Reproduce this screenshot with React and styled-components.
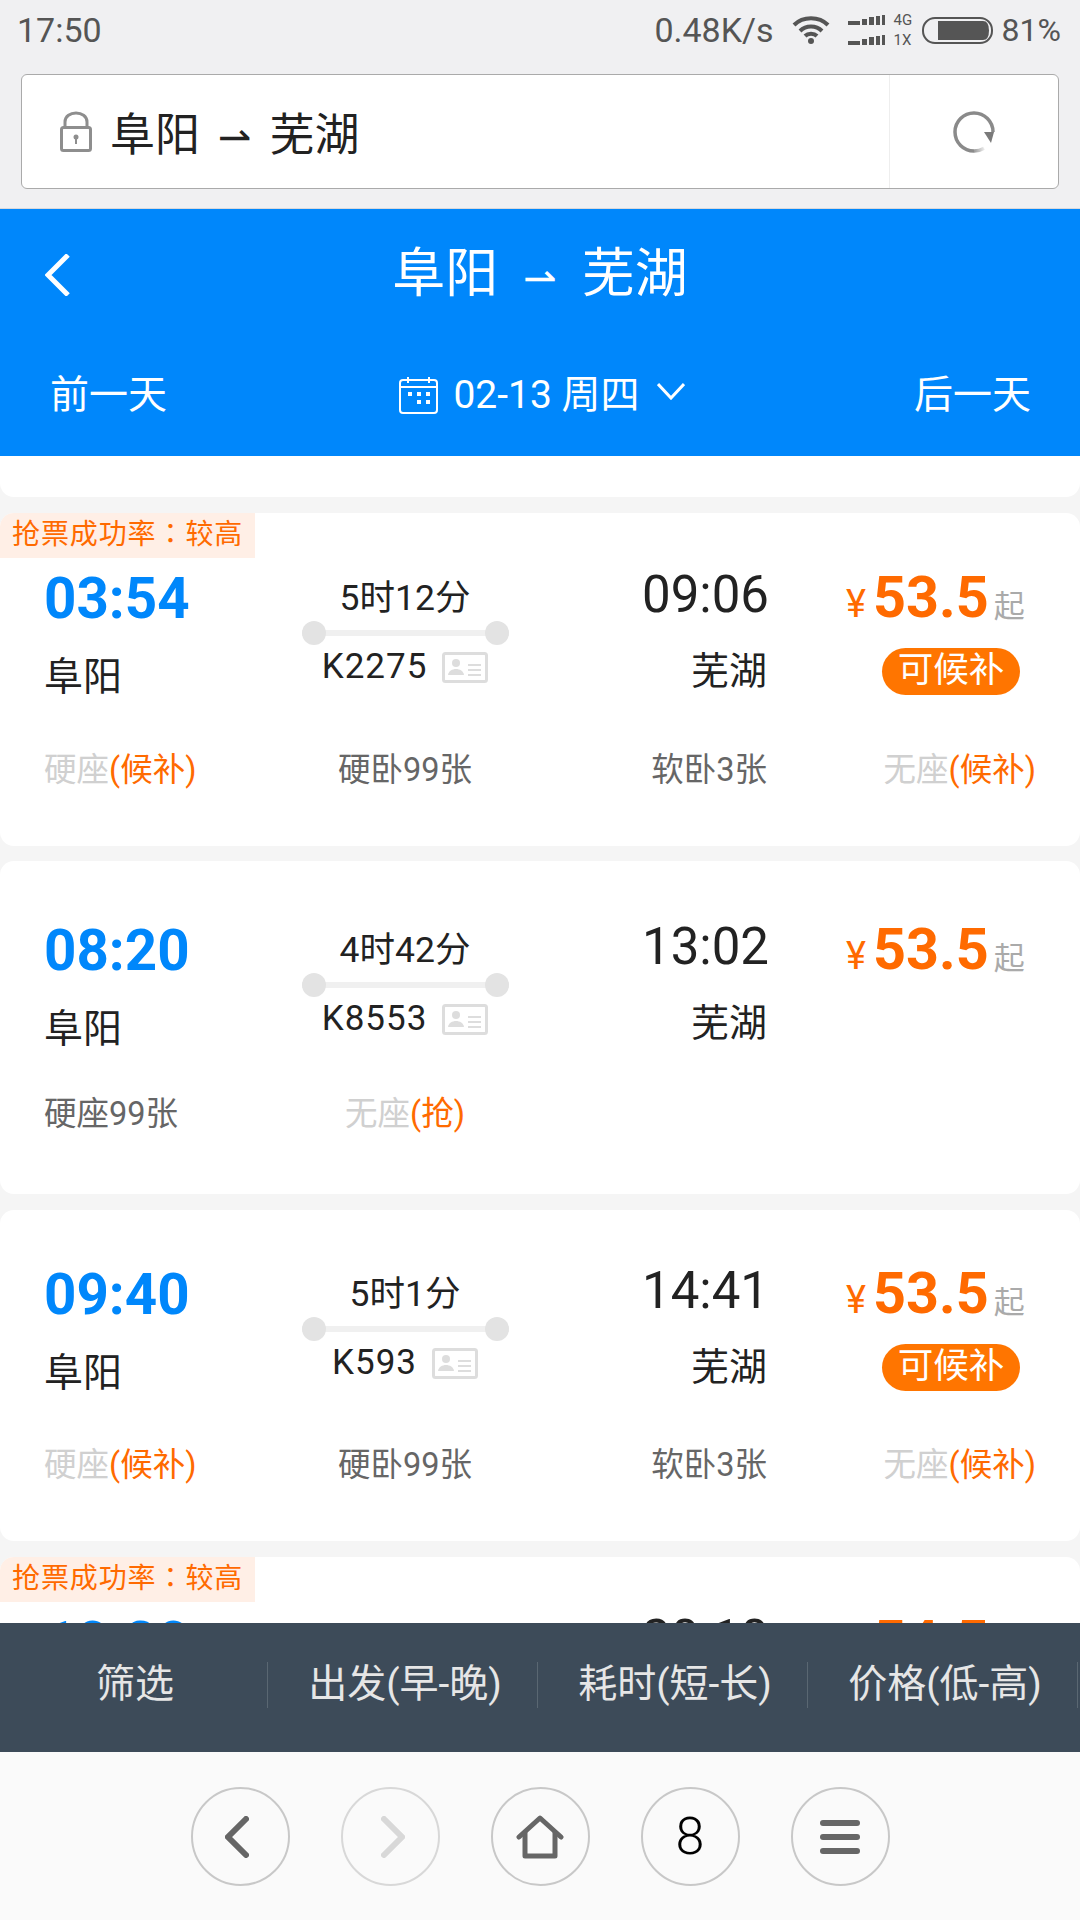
import React from "react";
import styled, { createGlobalStyle } from "styled-components";

const GlobalStyle = createGlobalStyle`
  html, body {
    margin: 0;
    padding: 0;
    background: #f0f0f2;
  }
  * {
    box-sizing: border-box;
  }
  body {
    font-family: Roboto, "Noto Sans CJK SC", sans-serif;
  }
`;

const Screen = styled.div`
  width: 1080px;
  height: 1920px;
  display: flex;
  flex-direction: column;
  overflow: hidden;
`;

const StatusBar = styled.div`
  height: 74px;
  flex: none;
  display: flex;
  align-items: center;
  justify-content: space-between;
  padding: 0 19px 14px 17px;
  color: #555;
  font-size: 34px;
  background: #f0f0f2;
`;

const StatusRight = styled.div`
  display: flex;
  align-items: center;
`;

const NetSpeed = styled.span`
  margin-right: 18px;
`;

const WifiIcon = styled.svg`
  margin-right: 18px;
`;

const SimLabels = styled.div`
  display: flex;
  flex-direction: column;
  font-size: 15px;
  line-height: 20px;
  margin: 0 5px 0 9px;
  width: 23px;
`;

const Percent = styled.span`
  margin-left: 8px;
  font-size: 32px;
`;

const AddressWrap = styled.div`
  flex: none;
  height: 135px;
  padding: 0 21px 20px;
  background: #f0f0f2;
  border-bottom: 1px solid #d8d8dc;
`;

const AddressBar = styled.div`
  height: 115px;
  display: flex;
  background: #fff;
  border: 1px solid #aaa;
  border-radius: 6px;
`;

const AddressText = styled.div`
  flex: 1;
  display: flex;
  align-items: center;
  padding-left: 38px;
  gap: 18px;
  font-size: 45px;
  color: #222;
`;

const RefreshCell = styled.div`
  width: 169px;
  display: flex;
  align-items: center;
  justify-content: center;
  border-left: 1px solid #eee;
`;

const Arrow = styled.span`
  font-family: "DejaVu Sans", sans-serif;
  font-size: 40px;
  margin: 0 ${(p) => p.$side}px;
`;

const Header = styled.div`
  flex: none;
  height: 247px;
  background: #0087fb;
  color: #fff;
`;

const TitleRow = styled.div`
  position: relative;
  height: 124px;
  display: flex;
  align-items: center;
  justify-content: center;
  padding-bottom: 5px;
  font-size: 53px;
`;

const BackIcon = styled.svg`
  position: absolute;
  left: 45px;
  top: 45px;
`;

const DateRow = styled.div`
  height: 123px;
  display: flex;
  align-items: center;
  justify-content: space-between;
  padding: 0 49px 7px 50px;
  font-size: 39px;
`;

const DatePicker = styled.div`
  display: flex;
  align-items: center;
  font-size: 39px;
  gap: 17px;
  padding-left: 3px;
`;

const CalendarIcon = styled.svg`
  margin: 7px -2px 0 0;
`;

const List = styled.div`
  flex: 1;
  min-height: 0;
  overflow: hidden;
  background: #f5f5f5;
`;

const TopStrip = styled.div`
  height: 41px;
  background: #fff;
  border-radius: 0 0 14px 14px;
  margin-bottom: 16px;
`;

const Card = styled.div`
  position: relative;
  height: ${(p) => p.$h}px;
  padding: ${(p) => p.$top}px 44px 0;
  background: #fff;
  border-radius: 14px;
  margin-bottom: ${(p) => p.$after}px;
`;

const Badge = styled.div`
  position: absolute;
  left: 0;
  top: 0;
  width: 255px;
  height: 45px;
  padding-left: 12px;
  line-height: 44px;
  font-family: Roboto, "Noto Sans CJK TC", sans-serif;
  font-size: 28px;
  letter-spacing: 0.9px;
  color: #ff6a00;
  background: #ffefe6;
  border-radius: 14px 0 0 0;
  white-space: nowrap;
`;

const TripRow = styled.div`
  display: grid;
  grid-template-columns: 260px 202px 261px 1fr;
  height: 170px;
`;

const Depart = styled.div`
  display: flex;
  flex-direction: column;
`;

const DepartTime = styled.div`
  color: #0087fb;
  font-size: 56.5px;
  font-weight: 700;
  line-height: 68px;
  margin: 1px 0 -1px;
`;

const City = styled.div`
  color: #222;
  font-size: ${(p) => p.$size}px;
  line-height: 50px;
  margin-top: 20px;
`;

const Middle = styled.div`
  display: flex;
  flex-direction: column;
  align-items: center;
`;

const Duration = styled.div`
  color: #222;
  font-size: 35.5px;
  line-height: 68px;
  height: 57px;
`;

const Track = styled.div`
  position: relative;
  width: 207px;
  height: 24px;
  flex: none;
  &::before {
    content: "";
    position: absolute;
    left: 0;
    right: 0;
    top: 9px;
    height: 6px;
    background: #f0f0f0;
  }
`;

const Dot = styled.span`
  position: absolute;
  top: 0;
  ${(p) => p.$side}: 0;
  width: 24px;
  height: 24px;
  border-radius: 50%;
  background: #e3e3e3;
`;

const TrainLine = styled.div`
  display: flex;
  align-items: center;
  gap: 15px;
  color: #222;
  font-size: 35px;
  line-height: 44px;
  letter-spacing: 1px;
  white-space: nowrap;
`;

const Arrive = styled.div`
  display: flex;
  flex-direction: column;
  align-items: flex-end;
`;

const ArriveTime = styled.div`
  color: #222;
  font-size: 51px;
  line-height: 62px;
  margin-right: -2px;
`;

const Price = styled.div`
  padding-left: 79px;
  display: flex;
  flex-direction: column;
  align-items: flex-start;
`;

const PriceLine = styled.div`
  display: flex;
  align-items: baseline;
  height: 68px;
  line-height: 68px;
`;

const Yen = styled.span`
  color: #ff6a00;
  font-size: 38px;
  margin-right: 7px;
`;

const Amount = styled.span`
  color: #ff6a00;
  font-size: 57.5px;
  font-weight: 700;
`;

const From = styled.span`
  color: #aaa;
  font-size: 31px;
  margin-left: 5px;
`;

const Pill = styled.div`
  width: 138px;
  height: 47px;
  margin: 16px 0 0 36px;
  border-radius: 24px;
  background: #ff7500;
  color: #fff;
  font-size: 35.5px;
  line-height: 45px;
  text-align: center;
  white-space: nowrap;
`;

const SeatRow = styled.div`
  display: grid;
  grid-template-columns: 260px 202px 261px 1fr;
  margin-top: ${(p) => p.$gap}px;
  font-size: 32.5px;
  line-height: 40px;
  white-space: nowrap;
`;

const Seat = styled.div`
  text-align: ${(p) => p.$align};
  color: ${(p) => (p.$off ? "#d0d0d0" : "#666")};
`;

const SeatNote = styled.span`
  color: #ff6a00;
`;

const SortBar = styled.div`
  flex: none;
  height: 129px;
  display: grid;
  grid-template-columns: repeat(4, 270px);
  padding-bottom: 6px;
  align-items: center;
  background: #3d4b59;
  margin-left: -2px;
  width: 1082px;
`;

const SortItem = styled.div`
  height: 46px;
  padding-left: 5px;
  line-height: 44px;
  text-align: center;
  font-size: 39px;
  color: #e6e6e6;
  border-right: 1px solid #5a6772;
  white-space: nowrap;
`;

const BrowserBar = styled.div`
  flex: none;
  height: 168px;
  display: flex;
  justify-content: center;
  gap: 51px;
  padding-top: 35px;
  background: #fafafa;
`;

const RoundButton = styled.div`
  width: 99px;
  height: 99px;
  border-radius: 50%;
  border: 2px solid ${(p) => (p.$dim ? "#d8d8d8" : "#c8c8c8")};
  display: flex;
  align-items: center;
  justify-content: center;
  font-size: 52px;
  font-weight: 300;
  color: #000;
`;

const NavChevron = styled.svg`
  margin: 0 ${(p) => (p.$left ? 7 : 0)}px 0 ${(p) => (p.$left ? 0 : 6)}px;
`;

const Wifi = () => (
  <WifiIcon width="38" height="30" viewBox="0 0 38 30" fill="none" stroke="#555" strokeWidth="4">
    <path d="M2 10 C11 1 27 1 36 10" />
    <path d="M8 16 C14 10 24 10 30 16" />
    <path d="M13 21 C16 18 22 18 25 21" />
    <circle cx="19" cy="26" r="3" fill="#555" stroke="none" />
  </WifiIcon>
);

const SignalBars = ({ y }) => (
  <>
    <rect x="0" y={y + 6} width="12" height="4" />
    <rect x="14" y={y + 4} width="5" height="6" />
    <rect x="21" y={y + 2} width="5" height="8" />
    <rect x="28" y={y + 1} width="4" height="9" />
    <rect x="34" y={y} width="3" height="10" />
  </>
);

const Signal = () => (
  <svg width="37" height="31" viewBox="0 0 37 31" fill="#555">
    <SignalBars y={0} />
    <SignalBars y={20} />
  </svg>
);

const Battery = () => (
  <svg width="72" height="27" viewBox="0 0 72 27">
    <rect x="1" y="1" width="69" height="25" rx="12" fill="none" stroke="#555" strokeWidth="2" />
    <path d="M16 4 H61 Q67 4 67 13.5 Q67 23 61 23 H16 Z" fill="#555" />
  </svg>
);

const Lock = () => (
  <svg width="32" height="41" viewBox="0 0 32 41" fill="none" stroke="#8e8e8e" strokeWidth="3">
    <path d="M5 16 V11 C5 -1 27 -1 27 11 V16" />
    <rect x="1.5" y="16.5" width="29" height="23" rx="2" />
    <circle cx="16" cy="26" r="2.5" fill="#8e8e8e" stroke="none" />
    <rect x="15" y="27" width="2" height="6" fill="#8e8e8e" stroke="none" />
  </svg>
);

const Refresh = () => (
  <svg width="44" height="44" viewBox="0 0 44 44" fill="none" strokeWidth="3.5">
    <defs>
      <linearGradient id="refreshFade" gradientUnits="userSpaceOnUse" x1="33" y1="38" x2="20" y2="41">
        <stop offset="0" stopColor="#f4f4f4" />
        <stop offset="1" stopColor="#8a8a8a" />
      </linearGradient>
    </defs>
    <path d="M22 41 A19 19 0 1 1 41 22" stroke="#8a8a8a" />
    <path d="M32 38.2 A19 19 0 0 1 22 41" stroke="url(#refreshFade)" />
    <path d="M32 22 H42 L39 33 Z" fill="#7a7a7a" />
  </svg>
);

const Calendar = () => (
  <CalendarIcon width="39" height="38" viewBox="0 0 39 38" fill="none" stroke="#fff" strokeWidth="2">
    <rect x="1" y="4" width="37" height="33" rx="3" />
    <path d="M1 11 H38 M9 1 V7 M30 1 V7" />
    <path d="M9 18 h4 M18 18 h4 M27 18 h4 M18 26 h4 M27 26 h4" strokeWidth="4" />
  </CalendarIcon>
);

const DateChevron = () => (
  <svg width="28" height="18" viewBox="0 0 28 18" fill="none" stroke="#fff" strokeWidth="3">
    <path d="M1 2 L14 16 L27 2" />
  </svg>
);

const IdCard = () => (
  <svg width="46" height="31" viewBox="0 0 46 31" fill="none" stroke="#ddd">
    <rect x="1.5" y="1.5" width="43" height="28" rx="2" strokeWidth="3" />
    <circle cx="14" cy="11" r="4" fill="#ddd" stroke="none" />
    <path d="M6 23 C7 15 21 15 22 23 Z" fill="#ddd" stroke="none" />
    <path d="M26 13 H39 M26 18 H39 M26 23 H39" strokeWidth="2" />
  </svg>
);

const NavBack = () => (
  <NavChevron $left width="24" height="42" viewBox="0 0 24 42" fill="none" stroke="#666" strokeWidth="6" strokeLinecap="round">
    <path d="M21 3 L3 21 L21 39" />
  </NavChevron>
);

const NavForward = () => (
  <NavChevron width="24" height="42" viewBox="0 0 24 42" fill="none" stroke="#d8d8d8" strokeWidth="6" strokeLinecap="round">
    <path d="M3 3 L21 21 L3 39" />
  </NavChevron>
);

const NavHome = () => (
  <svg width="48" height="44" viewBox="0 0 48 44" fill="none" stroke="#666" strokeWidth="5" strokeLinejoin="round" strokeLinecap="round">
    <path d="M3 22 L24 3 L45 22" />
    <path d="M9 18 V41 H39 V18" />
  </svg>
);

const NavMenu = () => (
  <svg width="40" height="34" viewBox="0 0 40 34" fill="#666">
    <rect x="0" y="0" width="40" height="6" rx="3" />
    <rect x="0" y="14" width="40" height="6" rx="3" />
    <rect x="0" y="28" width="40" height="6" rx="3" />
  </svg>
);

const fullSeats = [
  { name: "硬座", note: "(候补)", off: true },
  { name: "硬卧99张" },
  { name: "软卧3张" },
  { name: "无座", note: "(候补)", off: true },
];

const trains = [
  { depart: "03:54", arrive: "09:06", duration: "5时12分", code: "K2275", top: 51, height: 333, after: 15, seatGap: 16, badge: true, pill: true, seats: fullSeats },
  {
    depart: "08:20",
    arrive: "13:02",
    duration: "4时42分",
    code: "K8553",
    top: 55,
    height: 333,
    after: 16,
    seatGap: 8,
    seats: [{ name: "硬座99张" }, { name: "无座", note: "(抢)", off: true }],
  },
  { depart: "09:40", arrive: "14:41", duration: "5时1分", code: "K593", top: 50, height: 331, after: 16, seatGap: 15, pill: true, seats: fullSeats },
];

const seatAlign = ["left", "center", "right", "right"];

function TrainCard({ train }) {
  return (
    <Card $h={train.height} $top={train.top} $after={train.after}>
      {train.badge && <Badge>抢票成功率：较高</Badge>}
      <TripRow>
        <Depart>
          <DepartTime>{train.depart}</DepartTime>
          <City $size={39}>阜阳</City>
        </Depart>
        <Middle>
          <Duration>{train.duration}</Duration>
          <Track>
            <Dot $side="left" />
            <Dot $side="right" />
          </Track>
          <TrainLine>
            {train.code}
            <IdCard />
          </TrainLine>
        </Middle>
        <Arrive>
          <ArriveTime>{train.arrive}</ArriveTime>
          <City $size={38}>芜湖</City>
        </Arrive>
        <Price>
          <PriceLine>
            <Yen>¥</Yen>
            <Amount>53.5</Amount>
            <From>起</From>
          </PriceLine>
          {train.pill && <Pill>可候补</Pill>}
        </Price>
      </TripRow>
      <SeatRow $gap={train.seatGap}>
        {train.seats.map((seat, i) => (
          <Seat key={i} $align={seatAlign[i]} $off={seat.off}>
            {seat.name}
            {seat.note && <SeatNote>{seat.note}</SeatNote>}
          </Seat>
        ))}
      </SeatRow>
    </Card>
  );
}

// the fourth train is almost hidden by the sort bar, only the tops of its numbers show
function CutOffCard() {
  return (
    <Card $h={100} $top={51} $after={0}>
      <Badge>抢票成功率：较高</Badge>
      <TripRow>
        <Depart>
          <DepartTime>10:30</DepartTime>
        </Depart>
        <Middle />
        <Arrive>
          <ArriveTime>20:10</ArriveTime>
        </Arrive>
        <Price>
          <PriceLine>
            <Yen>¥</Yen>
            <Amount>54.5</Amount>
            <From>起</From>
          </PriceLine>
        </Price>
      </TripRow>
    </Card>
  );
}

export default function App() {
  return (
    <Screen>
      <GlobalStyle />
      <StatusBar>
        <span>17:50</span>
        <StatusRight>
          <NetSpeed>0.48K/s</NetSpeed>
          <Wifi />
          <Signal />
          <SimLabels>
            <span>4G</span>
            <span>1X</span>
          </SimLabels>
          <Battery />
          <Percent>81%</Percent>
        </StatusRight>
      </StatusBar>
      <AddressWrap>
        <AddressBar>
          <AddressText>
            <Lock />
            <span>
              阜阳
              <Arrow $side={18}>⇀</Arrow>
              芜湖
            </span>
          </AddressText>
          <RefreshCell>
            <Refresh />
          </RefreshCell>
        </AddressBar>
      </AddressWrap>
      <Header>
        <TitleRow>
          <BackIcon width="26" height="42" viewBox="0 0 26 42" fill="none" stroke="#fff" strokeWidth="5">
            <path d="M23 1 L3 21 L23 41" />
          </BackIcon>
          <span>
            阜阳
            <Arrow $side={25}>⇀</Arrow>
            芜湖
          </span>
        </TitleRow>
        <DateRow>
          <span>前一天</span>
          <DatePicker>
            <Calendar />
            <span>02-13 周四</span>
            <DateChevron />
          </DatePicker>
          <span>后一天</span>
        </DateRow>
      </Header>
      <List>
        <TopStrip />
        {trains.map((train) => (
          <TrainCard key={train.code} train={train} />
        ))}
        <CutOffCard />
      </List>
      <SortBar>
        <SortItem>筛选</SortItem>
        <SortItem>出发(早-晚)</SortItem>
        <SortItem>耗时(短-长)</SortItem>
        <SortItem>价格(低-高)</SortItem>
      </SortBar>
      <BrowserBar>
        <RoundButton><NavBack /></RoundButton>
        <RoundButton $dim><NavForward /></RoundButton>
        <RoundButton><NavHome /></RoundButton>
        <RoundButton>8</RoundButton>
        <RoundButton><NavMenu /></RoundButton>
      </BrowserBar>
    </Screen>
  );
}
